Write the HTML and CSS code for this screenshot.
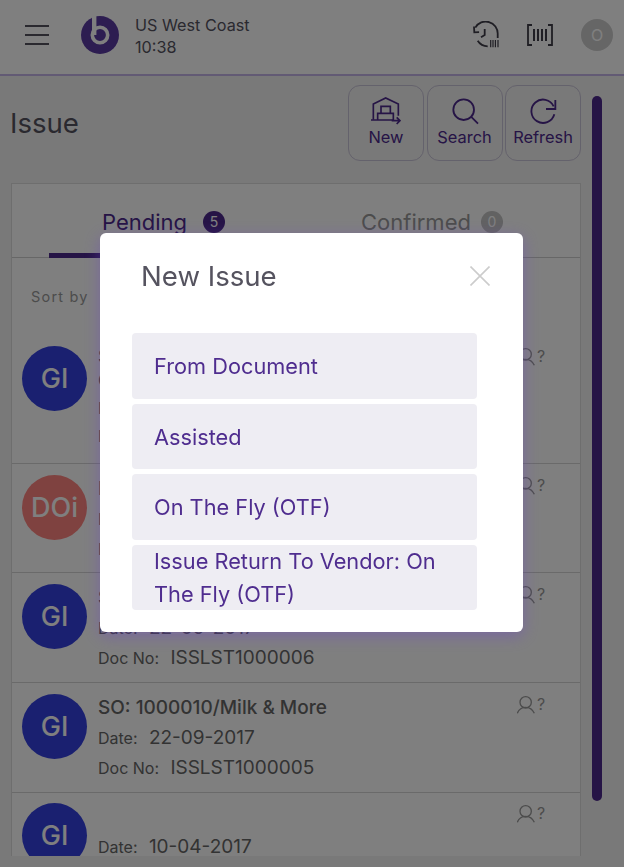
FILE: index.html
```html
<!DOCTYPE html>
<html lang="en">
<head>
  <meta charset="UTF-8">
  <title>Issue</title>
  <link rel="stylesheet" href="styles.css">
</head>
<body>
  <div class="app">
    <header class="topbar">
      <div class="hamburger"><span></span><span></span><span></span></div>
      <svg class="logo" viewBox="0 0 38 38">
        <circle cx="19" cy="19" r="19" fill="#5a3ba2"/>
        <path d="M13.2 0v19" stroke="#fff" stroke-width="4.400" fill="none"/>
        <circle cx="19" cy="19" r="7.700" fill="none" stroke="#fff" stroke-width="3.600"/>
      </svg>
      <div class="site">
        <div>US West Coast</div>
        <div>10:38</div>
      </div>
      <div class="topbar-right">
        <svg class="ico-history" viewBox="0 0 28 28" fill="none" stroke="#3f3d48" stroke-width="1.800">
          <path d="M3.300 6.600A12 12 0 0 1 25.700 13v4"/>
          <path d="M2 5.500l.3 5.800 4.800-.2"/>
          <path d="M5.700 19.700A12 12 0 0 0 15.700 25.300"/>
          <path d="M12.700 8v6L9 16.300"/>
          <path d="M18.700 19v7.300M21 19v7.300M23.400 19v7.300M26 19v7.300" stroke-width="1.200"/>
        </svg>
        <svg class="ico-barcode" viewBox="0 0 26 22" fill="none" stroke="#3f3d48" stroke-width="1.800">
          <path d="M5 1H1v20h4M21 1h4v20h-4"/>
          <path d="M7 5v12M11 5v12M15 5v12M19 5v12" stroke-width="2"/>
        </svg>
        <div class="user-dot">O</div>
      </div>
    </header>

    <div class="page">
      <div class="content">
        <div class="title-row">
          <h1>Issue</h1>
          <div class="actions">
            <div class="action-btn">
              <svg width="30" height="28" viewBox="178 295 90 82" fill="none" stroke="#4c288c" stroke-width="5">
                <path d="M185 362V315l37-18 38 18v35"/>
                <path d="M178 363h67M198 363v-20h47v20M208 343v-21h28v21"/>
                <path d="M240 365h24M255 355l10 10-10 10"/>
              </svg>
              <span>New</span>
            </div>
            <div class="action-btn">
              <svg width="28" height="28" viewBox="412 288 84 84" fill="none" stroke="#4c288c" stroke-width="5.500">
                <circle cx="450" cy="326" r="31"/>
                <path d="M472 347l21 21"/>
              </svg>
              <span>Search</span>
            </div>
            <div class="action-btn">
              <svg width="28" height="28" viewBox="654 288 84 84" fill="none" stroke="#4c288c" stroke-width="5.500">
                <path d="M728 316a35 35 0 1 0 2 24"/>
                <path d="M733 297v27h-28"/>
              </svg>
              <span>Refresh</span>
            </div>
          </div>
        </div>

        <div class="card">
          <div class="tabs">
            <div class="tab tab-on">Pending<b class="count">5</b></div>
            <div class="tab">Confirmed<b class="count count-off">0</b></div>
          </div>
          <div class="sort">Sort by</div>

          <div class="row row-first">
            <div class="avatar">GI</div>
            <div class="row-text">
              <div class="row-title">SO: 1000012/Milk &amp; More</div>
              <div class="row-title">Customer order</div>
              <div class="row-line"><label>Date:</label> 22-09-2017</div>
              <div class="row-line"><label>Doc No:</label> ISSLST1000008</div>
            </div>
            <div class="assignee">
              <svg width="18" height="18" viewBox="232 408 54 54" fill="none" stroke="#999" stroke-width="4"><circle cx="258" cy="427" r="17"/><path d="M233 460c5-14 15-18 25-18s20 4 26 18"/></svg>
              <span>?</span>
            </div>
          </div>

          <div class="row row-short">
            <div class="avatar avatar-red">DOi</div>
            <div class="row-text">
              <div class="row-title">DO: 1000011/Milk &amp; More</div>
              <div class="row-line"><label>Date:</label> 22-09-2017</div>
              <div class="row-line"><label>Doc No:</label> ISSLST1000007</div>
            </div>
            <div class="assignee">
              <svg width="18" height="18" viewBox="232 408 54 54" fill="none" stroke="#999" stroke-width="4"><circle cx="258" cy="427" r="17"/><path d="M233 460c5-14 15-18 25-18s20 4 26 18"/></svg>
              <span>?</span>
            </div>
          </div>

          <div class="row">
            <div class="avatar">GI</div>
            <div class="row-text">
              <div class="row-title">SO: 1000010/Milk &amp; More</div>
              <div class="row-line"><label>Date:</label> 22-09-2017</div>
              <div class="row-line"><label>Doc No:</label> ISSLST1000006</div>
            </div>
            <div class="assignee">
              <svg width="18" height="18" viewBox="232 408 54 54" fill="none" stroke="#999" stroke-width="4"><circle cx="258" cy="427" r="17"/><path d="M233 460c5-14 15-18 25-18s20 4 26 18"/></svg>
              <span>?</span>
            </div>
          </div>

          <div class="row">
            <div class="avatar">GI</div>
            <div class="row-text">
              <div class="row-title">SO: 1000010/Milk &amp; More</div>
              <div class="row-line"><label>Date:</label> 22-09-2017</div>
              <div class="row-line"><label>Doc No:</label> ISSLST1000005</div>
            </div>
            <div class="assignee">
              <svg width="18" height="18" viewBox="232 408 54 54" fill="none" stroke="#999" stroke-width="4"><circle cx="258" cy="427" r="17"/><path d="M233 460c5-14 15-18 25-18s20 4 26 18"/></svg>
              <span>?</span>
            </div>
          </div>

          <div class="row row-last">
            <div class="avatar">GI</div>
            <div class="row-text">
              <div class="row-title">&nbsp;</div>
              <div class="row-line"><label>Date:</label> 10-04-2017</div>
            </div>
            <div class="assignee">
              <svg width="18" height="18" viewBox="232 408 54 54" fill="none" stroke="#999" stroke-width="4"><circle cx="258" cy="427" r="17"/><path d="M233 460c5-14 15-18 25-18s20 4 26 18"/></svg>
              <span>?</span>
            </div>
          </div>
        </div>
      </div>
      <div class="scroll-track"><div class="scroll-thumb"></div></div>
    </div>
  </div>

  <div class="overlay">
    <div class="modal">
      <div class="modal-head">
        <h2>New Issue</h2>
        <svg class="close" width="20" height="20" viewBox="0 0 20 20" stroke="#ccc" stroke-width="1.600"><path d="M.5.500l19 19M19.500.500l-19 19"/></svg>
      </div>
      <div class="options">
        <div class="option">From Document</div>
        <div class="option">Assisted</div>
        <div class="option">On The Fly (OTF)</div>
        <div class="option">Issue Return To Vendor: On The Fly (OTF)</div>
      </div>
    </div>
  </div>
</body>
</html>
```

FILE: styles.css
```css
* {
  box-sizing: border-box;
}

html, body {
  margin: 0;
  height: 867px;
  overflow: hidden;
}

body {
  font-family: Inter, "Noto Sans", sans-serif;
  color: #55535f;
  background: #f2f2f2;
}

.app {
  height: 867px;
  display: flex;
  flex-direction: column;
}

/* top bar */
.topbar {
  height: 76px;
  flex: none;
  display: flex;
  align-items: center;
  padding: 0 11px 4px 25px;
  background: #fff;
  border-bottom: 2px solid #c4b5e8;
}

.hamburger {
  width: 24px;
  display: flex;
  flex-direction: column;
  gap: 7px;
}

.hamburger span {
  height: 2px;
  background: #55535f;
}

.logo {
  width: 38px;
  height: 38px;
  margin-left: 32px;
}

.site {
  margin: 2px 0 0 16px;
  font-size: 16.200px;
  line-height: 22px;
}

.topbar-right {
  margin-left: auto;
  display: flex;
  align-items: center;
}

.ico-history {
  width: 28px;
  height: 28px;
}

.ico-barcode {
  width: 26px;
  height: 22px;
  margin-left: 27px;
}

.user-dot {
  width: 32px;
  height: 32px;
  margin-left: 28px;
  border-radius: 50%;
  background: #cdcdcd;
  color: #fff;
  font-size: 16px;
  line-height: 32px;
  text-align: center;
}

/* page */
.page {
  flex: 1;
  min-height: 0;
  display: flex;
  padding: 9px 0 11px 10px;
}

.content {
  width: 571px;
  display: flex;
  flex-direction: column;
  min-height: 0;
}

.title-row {
  flex: none;
  display: flex;
  justify-content: space-between;
  align-items: center;
  height: 76px;
  margin-bottom: 22px;
}

h1 {
  margin: 0;
  font-size: 27.600px;
  font-weight: 400;
}

.actions {
  display: flex;
  gap: 2.500px;
}

.action-btn {
  width: 76px;
  height: 76px;
  padding-top: 11px;
  display: flex;
  flex-direction: column;
  align-items: center;
  border: 1px solid #c9c4d8;
  border-radius: 12px;
  color: #4c288c;
  font-size: 16.400px;
}

.action-btn span {
  margin-top: 2px;
}

.card {
  flex: 1;
  min-height: 0;
  margin-left: 1px;
  overflow: hidden;
  background: #fff;
  border: 1px solid #dcdcdc;
  border-bottom: none;
}

.tabs {
  display: flex;
  height: 74px;
  border-bottom: 1px solid #cfcfcf;
}

.tab {
  display: flex;
  align-items: flex-start;
  padding: 27px 0 0 70px;
  font-size: 22px;
  line-height: 22px;
  color: #999;
}

.tab-on {
  flex: none;
  width: 242px;
  margin: 0 0 -1px 37px;
  padding-left: 53px;
  color: #4c288c;
  border-bottom: 5px solid #4c288c;
}

.count {
  width: 22px;
  height: 22px;
  margin-left: 16px;
  border-radius: 50%;
  background: #4c288c;
  color: #fff;
  font-size: 14px;
  font-weight: 400;
  line-height: 22px;
  text-align: center;
}

.count-off {
  margin-left: 10px;
  background: #c4c4c4;
}

.sort {
  padding: 30px 0 0 19px;
  height: 72px;
  font-size: 14.500px;
  letter-spacing: 1.200px;
  color: #999;
}

.row {
  display: flex;
  height: 110px;
  padding: 11px 0 0 10px;
  border-bottom: 1px solid #d4d4d4;
}

.row-first {
  height: 134px;
  padding-top: 16px;
}

.row-short {
  height: 109px;
}

.row-last {
  padding-top: 10px;
}

.avatar {
  flex: none;
  width: 65px;
  height: 65px;
  border-radius: 50%;
  background: #3441e0;
  color: #fff;
  font-size: 27px;
  font-weight: 500;
  line-height: 65px;
  text-align: center;
}

.avatar-red {
  background: #ff8480;
}

.row-text {
  flex: 1;
  margin: 1px 0 0 11px;
}

.row-title {
  font-size: 19px;
  font-weight: 500;
  line-height: 26px;
  color: #666;
}

.row-line {
  margin-top: 4px;
  font-size: 19px;
  line-height: 26px;
  color: #666;
}

.row-line label {
  display: inline-block;
  margin-right: 6px;
  font-size: 16px;
}

.row-first .row-text {
  margin-top: -1px;
}

.row-first .row-title {
  line-height: 24px;
}

.row-first .row-line {
  margin-top: 2px;
}

.assignee {
  flex: none;
  width: 63px;
  margin-top: 2px;
  display: flex;
  align-items: flex-start;
  font-size: 16px;
  line-height: 16px;
  color: #999;
}

.assignee span {
  margin-left: 2px;
}

.scroll-track {
  flex: 1;
  padding: 11px 22px 55px 11px;
}

.scroll-thumb {
  height: 100%;
  border-radius: 5px;
  background: #4c288c;
}

/* dialog */
.overlay {
  position: fixed;
  inset: 0;
  background: rgba(0, 0, 0, 0.5);
}

.modal {
  position: absolute;
  left: 100px;
  top: 233px;
  width: 423px;
  height: 399px;
  padding: 0 46px 0 32px;
  background: #fff;
  border-radius: 6px;
  box-shadow: 0 4px 16px rgba(110, 70, 200, 0.45);
}

.modal-head {
  height: 100px;
  display: flex;
  justify-content: space-between;
  align-items: flex-start;
  padding: 26px 0 0 9px;
  margin-right: -13px;
}

h2 {
  margin: 0;
  font-size: 27.600px;
  font-weight: 400;
  line-height: 34px;
  color: #55535f;
}

.close {
  margin-top: 7px;
}

.options {
  display: flex;
  flex-direction: column;
  gap: 5px;
}

.option {
  height: 65.500px;
  display: flex;
  align-items: center;
  padding: 1.500px 22px 0;
  background: #eeedf3;
  border-radius: 4px;
  color: #4f2d8f;
  font-size: 21.750px;
  line-height: 33px;
}
```
